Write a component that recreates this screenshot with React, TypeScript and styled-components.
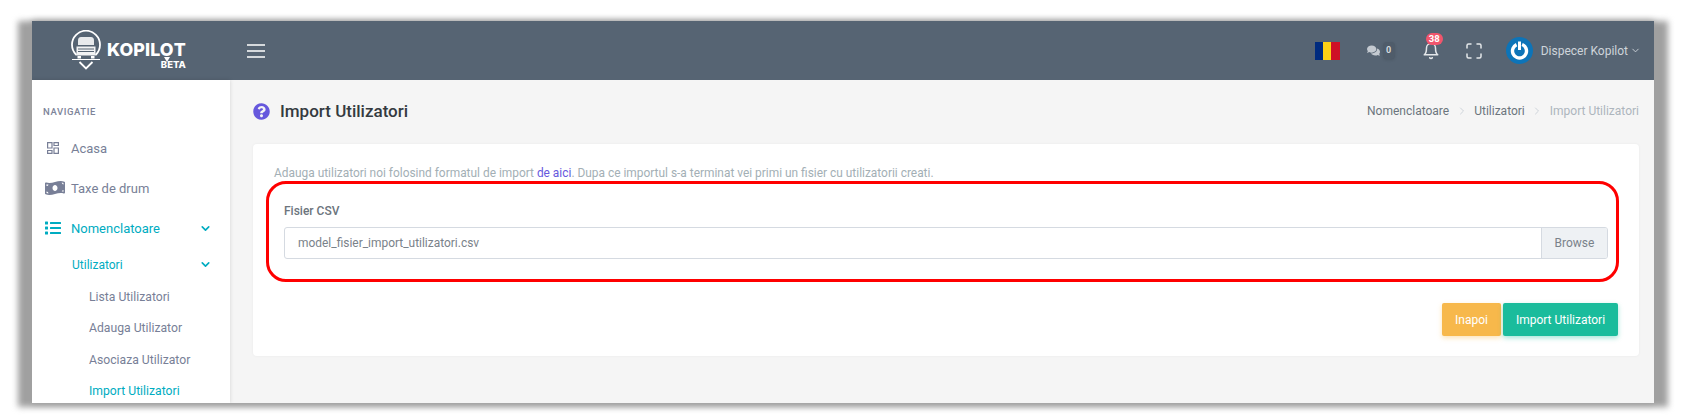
import React from 'react';
import styled, {createGlobalStyle} from "styled-components";
import {FaComments, FaList, FaMoneyBillWave, FaQuestionCircle} from "react-icons/fa";
import {FiBell, FiChevronDown, FiChevronRight} from "react-icons/fi";

const GlobalStyle = createGlobalStyle`
  html, body {
    margin: 0;
    padding: 0;
    background: #fff;
    overflow: hidden;
  }
  body {
    font-family: Roboto, "Liberation Sans", sans-serif;
  }
  * {
    box-sizing: border-box;
  }
`;

const Page = styled.div`
  width: 1681px;
  height: 419px;
  padding: 21px 27px 16px 32px;
`;

const Frame = styled.div`
  position: relative;
  width: 1622px;
  height: 382px;
  box-shadow: 0 0 7px rgba(0, 0, 0, 0.4);
  &::before {
    content: "";
    position: absolute;
    top: 0;
    bottom: -4px;
    left: -14px;
    right: -14px;
    background: #a0a0a0;
    filter: blur(3px);
  }
`;

const Shell = styled.div`
  position: relative;
  height: 100%;
  display: flex;
  flex-direction: column;
  overflow: hidden;
  background: #f5f5f5;
`;

const Topbar = styled.header`
  flex: 0 0 59px;
  display: flex;
  align-items: center;
  background: #566473;
`;

const Brand = styled.div`
  width: 215px;
  padding-left: 38px;
  display: flex;
  align-items: flex-start;
  height: 100%;
`;

const BrandMark = styled.svg`
  width: 32px;
  height: 42px;
  margin-top: 9px;
  flex: none;
`;

const BrandText = styled.div`
  margin: 21px 0 0 5px;
  display: flex;
  flex-direction: column;
  align-items: flex-end;
  color: #fff;
  font-family: Inter, sans-serif;
  font-weight: 800;
`;

const BrandName = styled.span`
  font-size: 17.8px;
  line-height: 16px;
  letter-spacing: 0.1px;
`;

const PinLetter = styled.span`
  position: relative;
  &::after {
    content: "";
    position: absolute;
    left: 50%;
    bottom: -2px;
    margin-left: -3px;
    border-left: 3px solid transparent;
    border-right: 3px solid transparent;
    border-top: 5px solid #fff;
  }
`;

const BrandTag = styled.span`
  font-size: 9.5px;
  line-height: 10px;
  margin-top: 2px;
`;

const MenuButton = styled.svg`
  width: 18px;
  height: 14px;
  flex: none;
`;

const TopActions = styled.div`
  margin-left: auto;
  display: flex;
  align-items: center;
  height: 100%;
  padding-right: 13px;
  color: #ced4da;
`;

const Flag = styled.div`
  width: 25px;
  height: 18px;
  display: flex;
  margin-right: 27px;
`;

const FlagStripe = styled.span<{$color: string}>`
  flex: 1;
  background: ${p => p.$color};
`;

const Chat = styled.div`
  display: flex;
  align-items: center;
  gap: 3px;
  margin-right: 27px;
  color: #c4cad1;
  font-size: 13px;
`;

const ChatCount = styled.span`
  width: 12px;
  height: 17px;
  border-radius: 4px;
  background: #4f5c6a;
  box-shadow: 0 1px 3px rgba(0, 0, 0, 0.12);
  color: #d5d9de;
  font-size: 9px;
  font-weight: 700;
  line-height: 17px;
  text-align: center;
`;

const Bell = styled.div`
  position: relative;
  display: flex;
  width: 18px;
  margin-right: 26px;
  font-size: 18px;
  color: #e4e7ea;
`;

const BellBadge = styled.span`
  position: absolute;
  top: -9px;
  left: 4px;
  width: 17px;
  height: 12px;
  border-radius: 6px;
  background: #f1556c;
  color: #fff;
  font-size: 9.5px;
  font-weight: 700;
  line-height: 12px;
  text-align: center;
`;

const FullscreenIcon = styled.svg`
  width: 16px;
  height: 16px;
  margin-right: 24px;
`;

const Avatar = styled.svg`
  width: 27px;
  height: 27px;
  margin-right: 8px;
`;

const UserName = styled.span`
  font-size: 12px;
  color: #ced4da;
  margin-right: 2px;
`;

const Body = styled.div`
  flex: 1;
  min-height: 0;
  display: flex;
`;

const Sidebar = styled.aside`
  position: relative;
  flex: 0 0 198px;
  background: #fff;
  box-shadow: 0 0 4px rgba(0, 0, 0, 0.14);
  padding-top: 26px;
`;

const NavTitle = styled.div`
  padding-left: 11px;
  margin-bottom: 10px;
  font-size: 9.5px;
  line-height: 12px;
  font-weight: 500;
  letter-spacing: 0.6px;
  color: #7d8499;
`;

const NavItem = styled.div<{$active?: boolean}>`
  height: 40px;
  display: flex;
  align-items: center;
  padding: 0 18px 0 13px;
  font-size: 13px;
  color: ${p => (p.$active ? "#00acc1" : "#787f97")};
`;

const NavIcon = styled.span`
  width: 26px;
  flex: none;
  display: flex;
  align-items: center;
  font-size: 16px;
`;

const HomeIcon = styled.svg`
  width: 12px;
  height: 12px;
  margin-left: 2px;
`;

const NavArrow = styled.span`
  margin-left: auto;
  display: flex;
  font-size: 13px;
  svg {
    stroke-width: 3;
  }
`;

const SubItem = styled(NavItem)`
  height: 33px;
  padding-left: 40px;
  font-size: 12px;
`;

const LeafItem = styled.div<{$active?: boolean}>`
  height: 31.5px;
  display: flex;
  align-items: center;
  padding-left: 57px;
  font-size: 12.2px;
  color: ${p => (p.$active ? "#00acc1" : "#787f97")};
`;

const Main = styled.main`
  flex: 1;
  min-width: 0;
  padding: 0 15px 0 23px;
`;

const TitleRow = styled.div`
  height: 64px;
  display: flex;
  align-items: center;
  padding-bottom: 2px;
`;

const TitleIcon = styled.span`
  display: flex;
  color: #6658dd;
  font-size: 17px;
  margin-right: 10px;
`;

const PageTitle = styled.h4`
  margin: 0;
  font-size: 17px;
  font-weight: 500;
  color: #343a40;
`;

const Breadcrumb = styled.nav`
  margin-left: auto;
  display: flex;
  align-items: center;
  font-size: 12px;
  color: #6c757d;
`;

const CrumbSep = styled.span`
  display: flex;
  margin: 0 6.5px;
  color: #ced4da;
  font-size: 12px;
`;

const CrumbCurrent = styled.span`
  color: #adb5bd;
`;

const Card = styled.section`
  position: relative;
  height: 212px;
  padding: 21px;
  background: #fff;
  border-radius: 4px;
  box-shadow: 0 0 3px rgba(0, 0, 0, 0.05);
`;

const Intro = styled.p`
  margin: 0;
  font-size: 11.92px;
  line-height: 16px;
  color: #a3afb5;
`;

const IntroLink = styled.a`
  color: #6658dd;
`;

const Field = styled.div`
  padding: 0 10px;
  margin-top: 22px;
`;

const FieldLabel = styled.label`
  display: block;
  font-size: 12px;
  line-height: 16px;
  font-weight: 500;
  color: #6c757d;
  margin-bottom: 8px;
`;

const FileRow = styled.div`
  display: flex;
  height: 32px;
  border: 1px solid #d5dae1;
  border-radius: 3px;
  overflow: hidden;
`;

const FileName = styled.div`
  flex: 1;
  padding-left: 13px;
  font-size: 11.95px;
  line-height: 30px;
  color: #7a828a;
`;

const BrowseButton = styled.div`
  width: 66px;
  background: #eef1f4;
  border-left: 1px solid #d5dae1;
  font-size: 12px;
  line-height: 30px;
  color: #7a828a;
  text-align: center;
`;

const Highlight = styled.div`
  position: absolute;
  left: 13px;
  top: 37px;
  width: 1353px;
  height: 101px;
  border: 3px solid #f00;
  border-radius: 20px;
  pointer-events: none;
`;

const Actions = styled.div`
  display: flex;
  justify-content: flex-end;
  gap: 2px;
  margin-top: 44px;
`;

const Button = styled.button<{$color: string; $width: number}>`
  width: ${p => p.$width}px;
  height: 33px;
  padding: 0;
  border: 0;
  border-radius: 2px;
  background: ${p => p.$color};
  box-shadow: 0 2px 5px ${p => p.$color}66;
  color: #fff;
  font-family: inherit;
  font-size: 12px;
`;

const subItems = ["Lista Utilizatori", "Adauga Utilizator", "Asociaza Utilizator"];

const App: React.FC = () => {
  return (
      <Page>
        <GlobalStyle/>
        <Frame>
          <Shell>
            <Topbar>
              <Brand>
                <BrandMark viewBox="0 0 32 42" fill="none">
                  <path d="M6 24.5A14 14 0 1 1 26 24.5" stroke="#fff" strokeWidth="1.8" strokeLinecap="round"/>
                  <path d="M8 10.5Q8 7 11 7H21Q24 7 24 10.5V15H8Z" fill="#e8eaec"/>
                  <path d="M6.5 16.5H25.5V25.5H6.5Z" fill="#f2f3f4"/>
                  <path d="M8 19H24M8 21.5H24" stroke="#566473" strokeWidth="1"/>
                  <path d="M7.5 26H11V28.5H7.5ZM21 26H24.5V28.5H21Z" fill="#fff"/>
                  <path d="M2 29.5H30" stroke="#fff" strokeWidth="1"/>
                  <path d="M9.5 32L16 38.5L22.5 32" stroke="#fff" strokeWidth="1.8"/>
                </BrandMark>
                <BrandText>
                  <BrandName>KOPIL<PinLetter>O</PinLetter>T</BrandName>
                  <BrandTag>BETA</BrandTag>
                </BrandText>
              </Brand>
              <MenuButton viewBox="0 0 18 14">
                <path d="M0 1H18M0 7H18M0 13H18" stroke="#fff" strokeWidth="1.6"/>
              </MenuButton>
              <TopActions>
                <Flag>
                  <FlagStripe $color="#002b7f"/>
                  <FlagStripe $color="#fcd116"/>
                  <FlagStripe $color="#ce1126"/>
                </Flag>
                <Chat>
                  <FaComments/>
                  <ChatCount>0</ChatCount>
                </Chat>
                <Bell>
                  <FiBell/>
                  <BellBadge>38</BellBadge>
                </Bell>
                <FullscreenIcon viewBox="0 0 16 16" fill="none" stroke="#e4e7ea" strokeWidth="1.5" strokeLinecap="round">
                  <path d="M1 5V2.5Q1 1 2.5 1H5M11 1H13.5Q15 1 15 2.5V5M15 11V13.5Q15 15 13.5 15H11M5 15H2.5Q1 15 1 13.5V11"/>
                </FullscreenIcon>
                <Avatar viewBox="0 0 27 27">
                  <circle cx="13.5" cy="13.5" r="13.5" fill="#0d74b8"/>
                  <circle cx="13.5" cy="14" r="7" fill="none" stroke="#fff" strokeWidth="3.4" strokeDasharray="38 6" transform="rotate(-68 13.5 14)"/>
                  <path d="M13.5 4.5V13" stroke="#fff" strokeWidth="3"/>
                </Avatar>
                <UserName>Dispecer Kopilot</UserName>
                <FiChevronDown size={11}/>
              </TopActions>
            </Topbar>
            <Body>
              <Sidebar>
                <NavTitle>NAVIGATIE</NavTitle>
                <NavItem>
                  <NavIcon>
                    <HomeIcon viewBox="0 0 12 12" fill="none" stroke="currentColor" strokeWidth="1.2">
                      <path d="M.6.6H5V6H.6ZM7 .6H11.4V3.5H7ZM.6 8.5H5V11.4H.6ZM7 6H11.4V11.4H7Z"/>
                    </HomeIcon>
                  </NavIcon>
                  Acasa
                </NavItem>
                <NavItem>
                  <NavIcon><FaMoneyBillWave size={20}/></NavIcon>
                  Taxe de drum
                </NavItem>
                <NavItem $active>
                  <NavIcon><FaList size={16}/></NavIcon>
                  Nomenclatoare
                  <NavArrow><FiChevronDown/></NavArrow>
                </NavItem>
                <SubItem $active>
                  Utilizatori
                  <NavArrow><FiChevronDown/></NavArrow>
                </SubItem>
                {subItems.map(item => {
                  return (
                      <LeafItem key={item}>{item}</LeafItem>
                  );
                })}
                <LeafItem $active>Import Utilizatori</LeafItem>
              </Sidebar>
              <Main>
                <TitleRow>
                  <TitleIcon><FaQuestionCircle/></TitleIcon>
                  <PageTitle>Import Utilizatori</PageTitle>
                  <Breadcrumb>
                    Nomenclatoare
                    <CrumbSep><FiChevronRight/></CrumbSep>
                    Utilizatori
                    <CrumbSep><FiChevronRight/></CrumbSep>
                    <CrumbCurrent>Import Utilizatori</CrumbCurrent>
                  </Breadcrumb>
                </TitleRow>
                <Card>
                  <Intro>
                    Adauga utilizatori noi folosind formatul de import <IntroLink>de aici</IntroLink>. Dupa ce importul s-a terminat vei primi un fisier cu utilizatorii creati.
                  </Intro>
                  <Field>
                    <FieldLabel>Fisier CSV</FieldLabel>
                    <FileRow>
                      <FileName>model_fisier_import_utilizatori.csv</FileName>
                      <BrowseButton>Browse</BrowseButton>
                    </FileRow>
                  </Field>
                  <Actions>
                    <Button $color="#f7b84b" $width={59}>Inapoi</Button>
                    <Button $color="#1abc9c" $width={115}>Import Utilizatori</Button>
                  </Actions>
                  <Highlight/>
                </Card>
              </Main>
            </Body>
          </Shell>
        </Frame>
      </Page>
  );
};

export default App;
